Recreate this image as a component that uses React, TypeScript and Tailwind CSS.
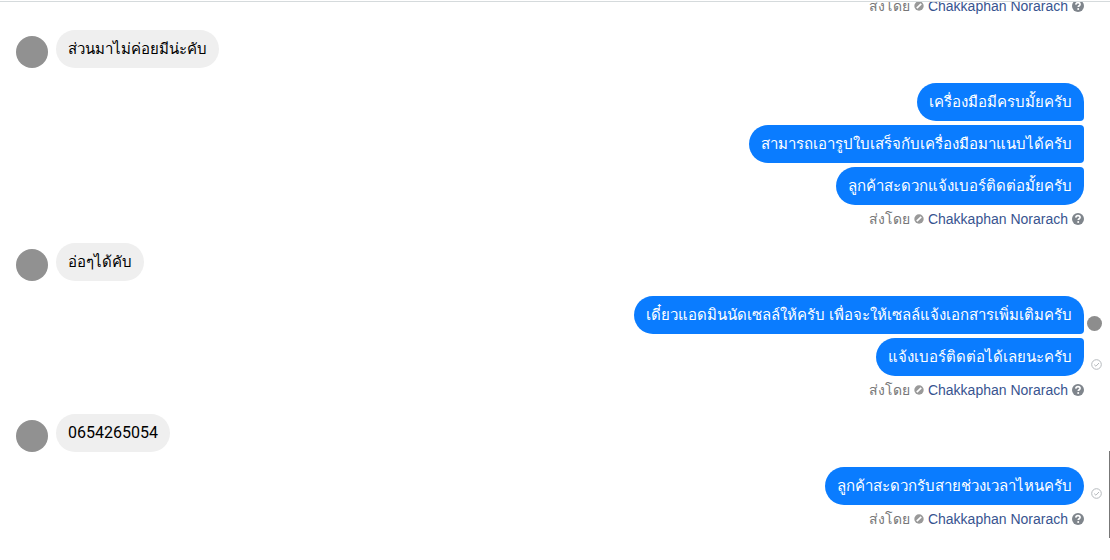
import React from 'react'
import { clsx } from 'clsx'

type Status = 'seen' | 'sent'

type OutMessage = {
  text: string
  status?: Status
}

type Group =
  | { id: number; from: 'customer'; text: string }
  | { id: number; from: 'page'; messages: OutMessage[]; sender: string }

const groups: Group[] = [
  { id: 1, from: 'page', messages: [], sender: 'Chakkaphan Norarach' },
  { id: 2, from: 'customer', text: 'ส่วนมาไม่ค่อยมีน่ะคับ' },
  {
    id: 3,
    from: 'page',
    messages: [
      { text: 'เครื่องมือมีครบมั้ยครับ' },
      { text: 'สามารถเอารูปใบเสร็จกับเครื่องมือมาแนบได้ครับ' },
      { text: 'ลูกค้าสะดวกแจ้งเบอร์ติดต่อมั้ยครับ' },
    ],
    sender: 'Chakkaphan Norarach',
  },
  { id: 4, from: 'customer', text: 'อ่อๆได้คับ' },
  {
    id: 5,
    from: 'page',
    messages: [
      { text: 'เดี๋ยวแอดมินนัดเซลล์ให้ครับ เพื่อจะให้เซลล์แจ้งเอกสารเพิ่มเติมครับ', status: 'seen' },
      { text: 'แจ้งเบอร์ติดต่อได้เลยนะครับ', status: 'sent' },
    ],
    sender: 'Chakkaphan Norarach',
  },
  { id: 6, from: 'customer', text: '0654265054' },
  {
    id: 7,
    from: 'page',
    messages: [{ text: 'ลูกค้าสะดวกรับสายช่วงเวลาไหนครับ', status: 'sent' }],
    sender: 'Chakkaphan Norarach',
  },
]

const isNumber = (text: string) => /^\d+$/.test(text)

const BlockedIcon = () => (
  <svg viewBox="0 0 10 10" className="h-[10px] w-[10px]" aria-hidden="true">
    <circle cx="5" cy="5" r="4.7" fill="#999" />
    <path d="M2.8 7.2 7.2 2.8" stroke="#fff" strokeWidth="1.7" />
  </svg>
)

const HelpIcon = () => (
  <svg viewBox="0 0 12 12" className="h-3 w-3" aria-hidden="true">
    <circle cx="6" cy="6" r="6" fill="#7f858c" />
    <path
      d="M3.8 4.6C3.9 3.2 4.8 2.6 6 2.6s2.1.7 2.1 1.8c0 1.4-1.9 1.3-1.9 2.7"
      fill="none"
      stroke="#fff"
      strokeWidth="1.6"
    />
    <circle cx="6.2" cy="9.1" r="1" fill="#fff" />
  </svg>
)

const SentIcon = () => (
  <svg viewBox="0 0 11 11" className="mb-[6px] h-[11px] w-[11px]" role="img" aria-label="sent">
    <circle cx="5.5" cy="5.5" r="4.8" fill="none" stroke="#b5b9bd" strokeWidth="1" />
    <path d="M3.2 5.6 4.9 7.2 8 4" fill="none" stroke="#b5b9bd" strokeWidth="1" />
  </svg>
)

const SentBy = ({ name }: { name: string }) => (
  <div className="mt-[5px] mr-[26px] flex items-center justify-end text-sm leading-[18px] text-[#777]">
    <span className="mr-1">ส่งโดย</span>
    <BlockedIcon />
    <a href="#profile" className="mr-1 ml-1 text-[#385490]">{name}</a>
    <button type="button" aria-label="help">
      <HelpIcon />
    </button>
  </div>
)

export default function App() {
  return (
    <main className="relative flex h-screen flex-col overflow-hidden bg-white pt-px font-['Liberation_Sans',sans-serif]">
      <div className="flex flex-1 flex-col justify-end gap-[15px] overflow-hidden border-t border-[#d5dadc] pb-8">
        {groups.map((group) =>
          group.from === 'customer' ? (
            <div key={group.id} className="flex items-end gap-2 pl-4">
              <div className="h-8 w-8 shrink-0 rounded-full bg-[#919191]" />
              <p
                className={clsx(
                  'h-[38px] rounded-full bg-[#efefef] px-3 leading-[38px] text-black',
                  isNumber(group.text) ? 'font-[Roboto,sans-serif] text-base' : 'text-[15px] font-medium'
                )}
              >
                {group.text}
              </p>
            </div>
          ) : (
            <div key={group.id}>
              <div className="flex flex-col gap-1">
                {group.messages.map((message, i) => (
                  <div key={message.text} className="flex items-end justify-end">
                    <p
                      className={clsx(
                        'h-[38px] rounded-l-[19px] bg-[#0a7cff] px-3 text-[15px] leading-[38px] font-medium text-white',
                        i === 0 ? 'rounded-tr-[19px]' : 'rounded-tr-[4px]',
                        i === group.messages.length - 1 ? 'rounded-br-[19px]' : 'rounded-br-[4px]'
                      )}
                    >
                      {message.text}
                    </p>
                    <div className="flex w-[26px] shrink-0 justify-end pr-2">
                      {message.status === 'seen' && (
                        <div className="mb-[3px] h-[15px] w-[15px] rounded-full bg-[#8d8d8d]" />
                      )}
                      {message.status === 'sent' && <SentIcon />}
                    </div>
                  </div>
                ))}
              </div>
              <SentBy name={group.sender} />
            </div>
          )
        )}
      </div>

      {/* Scroll thumb */}
      <div className="absolute right-0 bottom-[22px] h-[87px] w-px bg-[#777]" />
    </main>
  )
}
